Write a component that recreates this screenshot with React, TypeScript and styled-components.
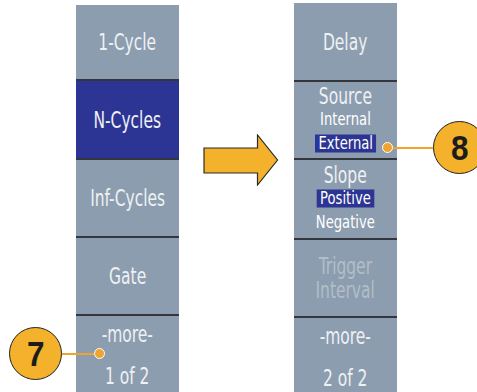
import styled, { createGlobalStyle } from "styled-components";

const GlobalStyle = createGlobalStyle`
    html, body {
        margin:0;
        padding:0;
        background:#ffffff;
    }
    body {
        font-family:"DejaVu Sans Condensed", "Liberation Sans", sans-serif;
    }
`;

const Stage = styled.div`
    position:relative;
    width:477px;
    height:392px;
    overflow:hidden;
    display:flex;
    flex-direction:row;
    align-items:flex-start;
    background:#ffffff;
`;

const Panel = styled.div<{ $top: number; $left: number }>`
    width:103px;
    height:${(p) => 392 - p.$top}px;
    margin-top:${(p) => p.$top}px;
    margin-left:${(p) => p.$left}px;
    display:flex;
    flex-direction:column;
    background:#8c9daf;
`;

const Button = styled.div<{ $h: number; $selected?: boolean; $first?: boolean; $spread?: boolean }>`
    height:${(p) => p.$h}px;
    flex:none;
    box-sizing:border-box;
    display:flex;
    flex-direction:column;
    align-items:center;
    justify-content:${(p) => (p.$spread ? "flex-start" : "center")};
    padding-top:${(p) => (p.$spread ? "6px" : "0")};
    gap:${(p) => (p.$spread ? "18px" : "0")};
    border-top:${(p) => (p.$first ? "none" : "2px solid #33363d")};
    background:${(p) => (p.$selected ? "#2d3594" : "#8c9daf")};
    color:#f4f6f8;
`;

const Label = styled.div<{ $dim?: boolean }>`
    font-size:21px;
    line-height:24px;
    transform:scale(0.82, 1.1);
    color:${(p) => (p.$dim ? "#b3bdc8" : "#eef1f4")};
    white-space:nowrap;
`;

const Option = styled.div<{ $on?: boolean }>`
    font-size:17px;
    line-height:17px;
    margin:3px 0 4px;
    padding:0 4px;
    transform:scale(0.86, 1.06);
    white-space:nowrap;
    color:#ffffff;
    background:${(p) => (p.$on ? "#2d3594" : "transparent")};
`;

const ArrowBox = styled.div`
    margin-top:134px;
    margin-left:24px;
    width:76px;
    height:52px;
    flex:none;
`;

const Callout = styled.div<{ $x: number; $y: number }>`
    position:absolute;
    left:${(p) => p.$x}px;
    top:${(p) => p.$y}px;
    display:flex;
    flex-direction:row;
    align-items:center;
`;

const Badge = styled.div`
    width:51px;
    height:51px;
    border-radius:50%;
    border:1.5px solid #222222;
    background:#f4b12b;
    display:flex;
    align-items:center;
    justify-content:center;
    font-family:"Liberation Sans", "DejaVu Sans", sans-serif;
    font-weight:bold;
    font-size:35px;
    color:#1c1c1c;
    flex:none;
`;

const Numeral = styled.span`
    display:inline-block;
    transform:scaleX(0.9);
`;

const Leader = styled.div<{ $w: number }>`
    width:${(p) => p.$w}px;
    height:2px;
    background:#eea431;
    flex:none;
`;

const Dot = styled.div`
    width:9px;
    height:9px;
    border-radius:50%;
    background:#eea431;
    border:1.5px solid #ffffff;
    flex:none;
`;

const Arrow = () => (
    <ArrowBox>
        <svg width="76" height="52" viewBox="0 0 76 52">
            <path
                d="M1 14 H54.5 V1 L74.5 26 L54.5 51 V39 H1 Z"
                fill="#f4b12b"
                stroke="#2b2b2b"
                strokeWidth="1.2"
                strokeLinejoin="miter"
            />
        </svg>
    </ArrowBox>
);

const App = () => {
    return (
        <>
            <GlobalStyle />
            <Stage>
                <Panel $top={5} $left={76}>
                    <Button $h={74} $first>
                        <Label>1-Cycle</Label>
                    </Button>
                    <Button $h={79} $selected>
                        <Label>N-Cycles</Label>
                    </Button>
                    <Button $h={78}>
                        <Label>Inf-Cycles</Label>
                    </Button>
                    <Button $h={78}>
                        <Label>Gate</Label>
                    </Button>
                    <Button $h={78} $spread>
                        <Label>-more-</Label>
                        <Label>1 of 2</Label>
                    </Button>
                </Panel>

                <Arrow />

                <Panel $top={3} $left={15}>
                    <Button $h={77} $first>
                        <Label>Delay</Label>
                    </Button>
                    <Button $h={78}>
                        <Label>Source</Label>
                        <Option>Internal</Option>
                        <Option $on>External</Option>
                    </Button>
                    <Button $h={80}>
                        <Label>Slope</Label>
                        <Option $on>Positive</Option>
                        <Option>Negative</Option>
                    </Button>
                    <Button $h={78}>
                        <Label $dim>Trigger</Label>
                        <Label $dim>Interval</Label>
                    </Button>
                    <Button $h={76} $spread>
                        <Label>-more-</Label>
                        <Label>2 of 2</Label>
                    </Button>
                </Panel>

                <Callout $x={9} $y={327}>
                    <Badge><Numeral>7</Numeral></Badge>
                    <Leader $w={32} />
                    <Dot />
                </Callout>

                <Callout $x={382} $y={121}>
                    <Dot />
                    <Leader $w={40} />
                    <Badge><Numeral>8</Numeral></Badge>
                </Callout>
            </Stage>
        </>
    );
};

export default App;
